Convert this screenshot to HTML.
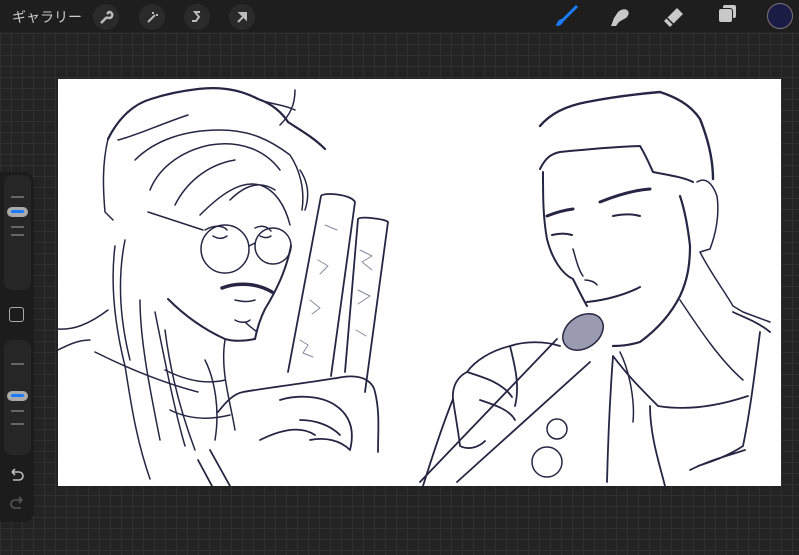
<!DOCTYPE html>
<html><head><meta charset="utf-8"><style>
body{margin:0;width:799px;height:555px;overflow:hidden;background:#232323;
background-image:linear-gradient(#2f2f2f 1px,transparent 1px),linear-gradient(90deg,#2f2f2f 1px,transparent 1px);background-size:11px 11px;font-family:"Liberation Sans","Noto Sans CJK JP",sans-serif;position:relative}
.top{position:absolute;left:0;top:0;width:799px;height:32px;background:#1e1e1e}
.gal{position:absolute;left:12px;top:7px;color:#ccc;font-size:14px}
.ib{position:absolute;top:4px;width:26px;height:26px;border-radius:50%;background:#2a2a2a}
.canvas{position:absolute;left:58px;top:79px;width:723px;height:407px;background:#fff;overflow:hidden}
.side{position:absolute;left:0;top:172px;width:34px;height:350px;background:#1c1c1c;border-radius:0 10px 10px 0}
.sl{position:absolute;left:4px;width:27px;height:115px;background:#262626;border-radius:8px}
.tick{position:absolute;left:7px;width:13px;height:2px;background:#666}
.knob{position:absolute;left:3px;width:21px;height:10px;border-radius:5px;background:#aaa}
.knob:after{content:"";position:absolute;left:4px;top:3px;width:13px;height:3px;background:#1a7cff;border-radius:2px}
</style></head><body>
<div class="top">
<div class="gal">ギャラリー</div>
<div class="ib" style="left:93px"><svg width="26" height="26"><path d="M8 19l6-6M14 13a3 3 0 1 0 2-5l-2 2" stroke="#bbb" stroke-width="2.5" fill="none"/></svg></div>
<div class="ib" style="left:139px"><svg width="26" height="26"><path d="M9 18l7-7M14 8v2M17 11h2" stroke="#bbb" stroke-width="2" fill="none"/></svg></div>
<div class="ib" style="left:184px"><svg width="26" height="26"><path d="M16 8h-5l4 5-3 4h-4" stroke="#bbb" stroke-width="2" fill="none"/></svg></div>
<div class="ib" style="left:229px"><svg width="26" height="26"><path d="M9 18l8-8M11 9h6v6z" stroke="#bbb" stroke-width="2" fill="#bbb"/></svg></div>
<svg style="position:absolute;left:553px;top:4px" width="28" height="24"><path d="M24 2L9 17" stroke="#1a7cff" stroke-width="3"/><path d="M9 15c-3 0-5 3-6 7 3 0 6-1 7-4z" fill="#1a7cff"/></svg>
<svg style="position:absolute;left:605px;top:4px" width="28" height="24"><path d="M6 22l3-8 4-6c3-3 8-4 10-1 2 3-1 7-4 8l-5 3-3 4z" fill="#c8c8c8"/></svg>
<svg style="position:absolute;left:660px;top:5px" width="28" height="22"><path d="M4 16l13-13 6 6-13 13z" fill="#c8c8c8"/><path d="M7 13l6 6" stroke="#1e1e1e" stroke-width="1.5"/></svg>
<div style="position:absolute;left:718px;top:8px;width:13px;height:13px;border-radius:3px;background:#c8c8c8;border:1.5px solid #1e1e1e;box-shadow:4px -4px 0 -1px #c8c8c8"></div>
<div style="position:absolute;left:767px;top:3px;width:24px;height:24px;border-radius:50%;background:#1b1c45;border:1.5px solid #777"></div>
</div>
<div class="canvas">
<svg width="723" height="407" viewBox="58 79 723 407" fill="none" stroke="#262644" stroke-width="1.5" stroke-linecap="round" stroke-linejoin="round">
<!-- left man hair -->
<path stroke-width="2.2" d="M108 139c10-20 25-35 43-40 15-5 30-8 47-10 25-3 45 2 60 10 15 5 25 15 30 23 12 8 25 15 37 27"/>
<path d="M108 139c-6 25-5 50-3 73M105 212l8 8M118 140c20-5 40-15 70-25M135 160c20-20 50-30 85-30 30 0 50 10 70 25M150 190c10-25 35-40 60-45 30-5 55 5 70 25M175 205c10-20 30-40 60-45M200 215c20-20 40-35 60-30 15 5 25 20 30 40M230 200c15-15 30-20 45-10M290 155c10 15 15 35 12 55M300 170c8 12 10 25 5 40M260 100c15 5 25 5 35 10M280 125c10-10 15-20 15-35"/>
<path d="M115 246c-5 40 0 80 10 120 5 30 10 70 25 113M125 240c-8 40-5 80 5 120M140 300c0 40 10 90 20 140M155 312c10 50 20 100 30 134M165 330c5 40 15 80 30 120M108 310c-20 15-35 20-50 19M90 340c-12 0-22 5-32 10M205 360c10 20 15 50 10 80M225 340c-5 30 5 60 10 90"/>
<!-- glasses -->
<circle cx="225" cy="249" r="24"/><circle cx="273" cy="246" r="18"/>
<path d="M148 212l55 18M249 246l6-3"/>
<path d="M205 230c8-5 18-5 22 0M255 228c6-3 12-2 16 3M213 236c5 3 10 3 14 0M260 236c4 2 8 2 11 0"/>
<!-- face -->
<path stroke-width="2" d="M291 246c-5 25-15 45-26 63-5 10-8 20-10 30M168 299c15 15 35 30 57 40 10 3 20 2 30 0"/>
<path stroke-width="3.5" d="M222 288c15-6 35-5 50 4"/>
<path d="M235 300c8 2 15 2 20 0M235 320c5 3 12 3 15 0M245 322c5 5 10 8 12 10"/>
<path d="M95 352c30 15 65 30 103 40M170 410c20 10 40 10 60 5M165 370c20 10 40 15 60 10"/>
<!-- sticks -->
<path stroke-width="1.8" d="M288 372l33-176c2-4 30-2 34 6l-24 174M345 372l13-153c3-3 27 0 30 3l-23 170"/>
<path stroke="#8888a0" stroke-width="1" d="M300 340l8 5-5 8 10 4M310 300l10 8-8 6M318 260l10 6-8 8M325 225l12 5M360 250l12 6-10 6 10 8M358 290l12 6-12 8M356 330l10 6"/>
<!-- hand -->
<path stroke-width="1.8" d="M218 412c8-10 15-18 25-20 30-5 70-10 100-15 20-3 30 5 32 15 5 20 3 40 3 60M280 400c15-5 40-5 55 5 15 10 20 25 15 45M300 420c15 0 30 5 40 15M310 440c15-3 30 0 40 10M260 440c20-10 40-15 55-5M210 450l20 36M198 460l14 26"/>
<!-- right man hair -->
<path stroke-width="2.4" d="M540 126c10-12 25-20 47-24 25-5 50-8 73-10 15 5 30 12 40 27 8 20 13 40 13 60"/>
<path stroke-width="2" d="M540 169c5-10 10-15 20-17 30-3 55-5 80-6 5 8 8 15 13 26 15 3 30 5 40 10M543 172c0 25 0 45 4 67 5 20 15 35 26 40 5 10 10 20 14 27"/>
<path stroke-width="2.2" d="M680 196c5 15 8 32 10 50 0 20-3 35-10 50-10 20-25 35-40 46-10 3-20 4-27 4"/>
<path d="M697 182c8-5 15 0 20 14 3 20-2 40-7 53l-10 3M700 252c10 20 25 40 33 54l10 6 27 10M620 352c10 20 15 50 13 70M680 300c20 30 40 60 63 80"/>
<path stroke-width="3" d="M600 202c20-8 35-12 50-13M547 216c10-4 18-6 26-7"/>
<path stroke-width="2" d="M613 216c10-2 20-2 27 0M552 235c8-2 14-2 20 0"/>
<path d="M573 249c3 10 5 20 10 27M585 280c5 0 10 2 12 5"/>
<path stroke-width="2" d="M587 302c20-2 40-8 53-15"/>
<!-- mic -->
<ellipse cx="583" cy="332" rx="22" ry="16" transform="rotate(-35 583 332)" fill="#9a9ab0"/>
<path stroke-width="1.8" d="M557 339L420 482M590 362L457 482"/>
<!-- hand -->
<path stroke-width="1.8" d="M560 346c-15-5-35-5-50 0-20 5-35 15-43 26-10 5-15 15-14 27 2 15 5 30 7 47 10 5 20 0 25-5M510 346c5 20 10 40 5 60M467 372c15 5 35 10 45 25M480 400c15 5 30 10 35 20"/>
<!-- shirt -->
<path stroke-width="1.8" d="M613 356c-3 40-5 85-6 126M613 356c15 20 30 35 45 50 30 5 60 0 90-10M733 312c10 5 25 10 37 20M760 332c-5 40-10 80-17 114-15 10-30 15-45 20M650 406c0 30 10 60 15 80M690 470c20-10 40-15 55-20"/>
<circle cx="547" cy="462" r="15"/><circle cx="557" cy="429" r="10"/>
<!-- left edge of right man arm -->
<path stroke-width="1.8" d="M453 399c-10 25-20 55-30 87"/>
</svg>
</div>
<div class="side">
<div class="sl" style="top:3px">
<div class="tick" style="top:21px"></div><div class="knob" style="top:32px"></div>
<div class="tick" style="top:51px"></div><div class="tick" style="top:59px"></div></div>
<div style="position:absolute;left:9px;top:135px;width:13px;height:13px;border:1.5px solid #aaa;border-radius:3px"></div>
<div class="sl" style="top:168px">
<div class="tick" style="top:23px"></div><div class="knob" style="top:51px"></div>
<div class="tick" style="top:70px"></div><div class="tick" style="top:83px"></div></div>
<svg style="position:absolute;left:7px;top:296px" width="20" height="16"><path d="M5 4h7a4 4 0 0 1 0 8H6M5 4l3-3M5 4l3 3" stroke="#bbb" stroke-width="1.6" fill="none"/></svg>
<svg style="position:absolute;left:7px;top:324px" width="20" height="16"><path d="M15 4H8a4 4 0 0 0 0 8h6M15 4l-3-3M15 4l-3 3" stroke="#555" stroke-width="1.6" fill="none"/></svg>
</div>
</body></html>
